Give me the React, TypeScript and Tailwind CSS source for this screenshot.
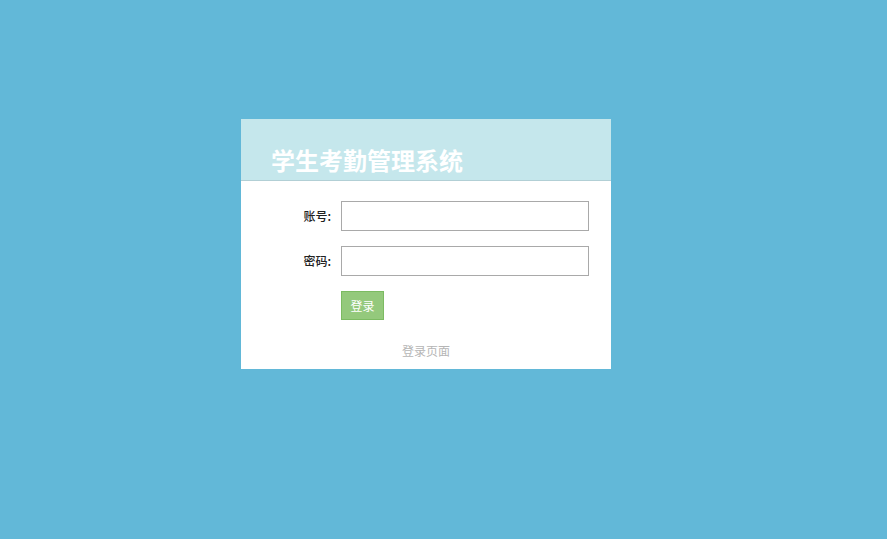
export default function App() {
  const font = { fontFamily: '"Noto Sans CJK SC", "Noto Sans", sans-serif' };
  return (
    <div className="w-full h-[539px] bg-[#62b8d8] overflow-hidden pt-[119px]" style={font}>
      <div className="ml-[241px] w-[370px] bg-white">
        <div className="h-[62px] bg-[#c5e7ec] border-b border-[#b2cfd5] pl-[30px] pt-[29px]">
          <h1 className="text-[24px] leading-[24px] font-bold text-white tracking-[0px]">学生考勤管理系统</h1>
        </div>
        <div className="pt-[20px] pb-[10px]">
          <div className="flex items-center gap-[10px]">
            <label className="w-[90px] text-right text-[12px] font-medium text-[#222]">账号:</label>
            <input className="w-[248px] h-[30px] border border-[#a9a9a9] outline-none px-1 text-[12px]" />
          </div>
          <div className="flex items-center gap-[10px] mt-[15px]">
            <label className="w-[90px] text-right text-[12px] font-medium text-[#222]">密码:</label>
            <input type="password" className="w-[248px] h-[30px] border border-[#a9a9a9] outline-none px-1 text-[12px]" />
          </div>
          <div className="flex mt-[15px] pl-[100px]">
            <button className="w-[43px] h-[29px] bg-[#94c97c] border border-[#7cbb62] text-white text-[12px] leading-none">登录</button>
          </div>
          <div className="mt-[23px] text-center text-[12px] leading-[16px] text-[#b5b5b5]">登录页面</div>
        </div>
      </div>
    </div>
  );
}
